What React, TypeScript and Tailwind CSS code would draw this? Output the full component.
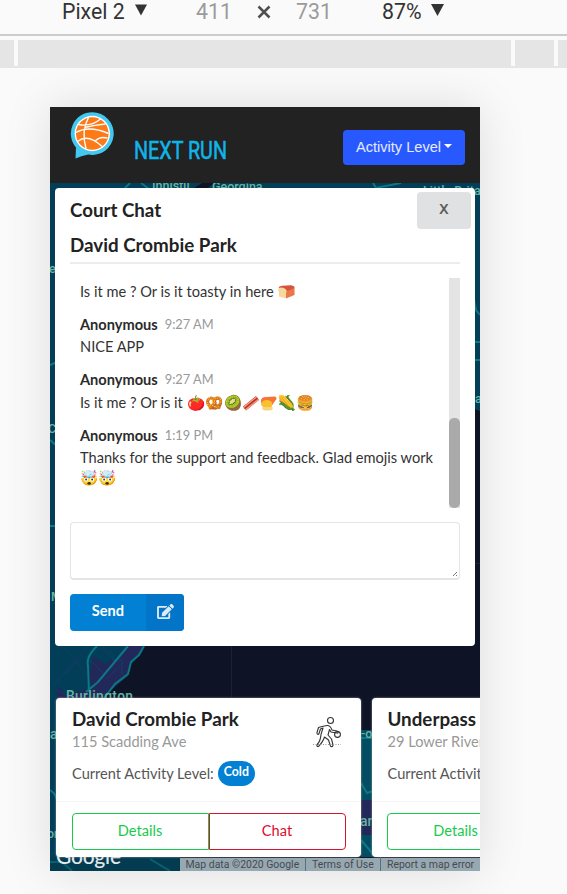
import React from "react";

const lato = "font-[Lato,'Noto_Color_Emoji',sans-serif]";

function Toolbar() {
  return (
    <div className="relative h-[36px] border-b-2 border-[#cccccc] font-[Roboto,sans-serif] text-[21.3px] leading-[24px] text-[#333]">
      <div className="flex h-[24px] whitespace-nowrap">
        <span className="ml-[62px] w-[73px]">Pixel 2</span>
        <svg className="mt-[4px] h-[12px] w-[12px]" viewBox="0 0 13 12"><path d="M0 0h13L6.500 12z" fill="#333" /></svg>
        <span className="ml-[49px] w-[61px] text-[#9b9b9b]">411</span>
        <svg className="mt-[5px] h-[14px] w-[14px]" viewBox="0 0 14 14"><path d="M1.500 1.500l11 11M12.500 1.500l-11 11" stroke="#505050" strokeWidth="2.500" /></svg>
        <span className="ml-[25px] w-[86px] text-[#9b9b9b]">731</span>
        <span className="w-[49px]">87%</span>
        <svg className="mt-[4px] h-[12px] w-[13px]" viewBox="0 0 13 12"><path d="M0 0h13L6.500 12z" fill="#333" /></svg>
      </div>
    </div>
  );
}

function Ruler() {
  return (
    <div className="relative mt-[4px] flex h-[28px] gap-[4px] border-b-2 border-[#e5e5e5]">
      <div className="w-[14px] bg-[#e5e5e5]" />
      <div className="w-[493px] bg-[#e5e5e5]" />
      <div className="w-[39px] bg-[#e5e5e5]" />
      <div className="flex-1 bg-[#e5e5e5]" />
    </div>
  );
}

function Logo() {
  return (
    <svg className="h-[50px] w-[46px]" viewBox="0 0 46 50">
      <path d="M23.300 1.300a21.300 21.300 0 1 1-4 42.200Q12 45 6.500 47.500L7 36.500A21.300 21.300 0 0 1 23.300 1.300z" fill="#43c8f0" />
      <circle cx="23.300" cy="22.500" r="17.700" fill="#fff" />
      <circle cx="23.300" cy="22.500" r="16.300" fill="#fc7a18" />
      <g fill="none" stroke="#fff" strokeWidth="1.400">
        <path d="M19.500 6.500Q12 20 17 37.500M7 21.500Q20 14 39.500 22.500M9.500 13.500Q22 16 31.500 8M8.500 30.500Q19 22 33 35.500M15.500 16.500Q26 14 36.500 13M26 30Q31 25 38.500 27" />
      </g>
    </svg>
  );
}

function MapArt() {
  return (
    <svg className="absolute inset-0 h-[688px] w-[430px]" viewBox="50 183 430 688" fontFamily="Roboto, sans-serif">
      <rect x="50" y="183" width="430" height="688" fill="#0e1326" />
      <path d="M50 183h430v228l-6-2V190H57v456h87l-4 8-9 10-3 12-30 25v170H50z" fill="#023e58" />
      <path d="M202 183h12l-6 5h-14z" fill="#0e1326" />
      <path d="M128 646h15l-4 9-8 7-3 12-25 24H57v-10l33-2z" fill="#23285a" />
      <path d="M57 646h69l-34 42-25 7-10-10z" fill="#023e58" />
      <path d="M93 656l12 8 6-4 4 2-22 26-4-10z" fill="#23285a" />
      <path d="M50 600l22 15 22 25 20 16M53 686l35-40M62 646l25 28M65 674l15-15M57 690l15 8M101 648l14 12M106 679l18-17M90 660l14 14M112 660h10v15" fill="none" stroke="#123c68" strokeWidth="1" />
      <g fill="none" stroke="#0c7884" strokeWidth="2">
        <path d="M97 646c-9 9-10 14-9 20l1 26M128 646l-30 36-12 10M144 646l-5 9-8 7-3 12-13 10-13 17M50 526h7M373 183l3 5 25-5M50 365l7-3M50 440l7 6M474 300l2 10 4 5M474 342h6M474 360h6" />
        <path d="M130 183l-5 5M141 183l8 6M50 790q9 5 7 20" />
      </g>
      <rect x="361" y="730" width="12" height="127" fill="#034d64" />
      <path d="M361 800h12v35h-12z" fill="#23285a" />
      <path d="M361 738h12M361 783l6 10 6-2M361 840l12 14" stroke="#0c7884" strokeWidth="2" fill="none" />
      <path d="M50 857h130v14H50z" fill="#033c50" />
      <path d="M50 862h12l10 9M150 859l20 12" stroke="#07626f" strokeWidth="2" fill="none" />
      <path d="M231.500 646v52M475 563.500h5" stroke="#1a2236" />
      <g fill="#64b5a4" fontSize="12.500" fontWeight="500">
        <text x="152" y="190">Innisfil</text>
        <text x="212" y="190.500">Georgina</text>
        <text x="423" y="195">Little Brita</text>
        <text x="49" y="273">e</text>
        <text x="48" y="433">C</text>
        <text x="475" y="403">a</text>
        <text x="51" y="601">M</text>
        <text x="66" y="701" fontSize="13.800" textLength="67">Burlington</text>
        <text x="50" y="739" fontSize="14">a</text>
        <text x="47" y="838">on</text>
        <text x="361" y="738">-on</text>
        <text x="360" y="826" fontSize="14">an</text>
      </g>
      <text x="56" y="863.500" fontSize="21" textLength="65" fontWeight="500" fontFamily="Lato, sans-serif" fill="#e4e9ec">Google</text>
    </svg>
  );
}

function Bread() {
  return (
    <svg className="ml-px inline-block h-[14px] w-[17px] align-[-2px]" viewBox="0 0 17 14">
      <path d="M7 6l9.500-3v7L8 13.500z" fill="#e8784a" />
      <path d="M1 3Q0 1.500 4 .7L13 .3q4 .5 3.500 3L8 6.500z" fill="#d4543c" />
      <path d="M1 3q4-1.500 7 1.500 1.500 2 0 3V13.500L1 11.500V7Q-.5 5 1 3z" fill="#f8d79c" />
    </svg>
  );
}

function Bacon() {
  return (
    <svg className="ml-px mr-px inline-block h-[16px] w-[16px] align-[-3px]" viewBox="0 0 16 16" fill="none">
      <path d="M1.500 13.500L14.500 3" stroke="#d84a38" strokeWidth="5" />
      <path d="M.8 12.200L13.500 2M2.500 14.800L15.500 4.400" stroke="#f5a58c" strokeWidth="1.100" />
      <path d="M1.500 13.500L14.500 3" stroke="#9f3028" strokeWidth="1" />
    </svg>
  );
}

function Roast() {
  return (
    <svg className="mr-px inline-block h-[15px] w-[17px] align-[-3px]" viewBox="0 0 17 15">
      <path d="M1 5Q1 1 6 1L15 .5Q18 2 15 5L11 11 1 7z" fill="#f4743b" />
      <path d="M1 8Q2 4 7 4 12 4.500 12.500 8 12 11.500 8 11.500 1 11.500 1 8z" fill="#fbc02f" />
      <path d="M2.500 11h10q1 3.500-3 3.500H5q-3.500-.5-2.500-3.500z" fill="#f7d580" />
    </svg>
  );
}

interface MessageProps { author?: string; time?: string; children: React.ReactNode; }

function Message({ author, time, children }: MessageProps) {
  return (
    <div className="mb-[10.5px]">
      {author && (
        <div className="flex h-[22px] items-center pt-[3px]">
          <span className="text-[14.600px] font-bold text-[#2b2b2b]">{author}</span>
          <span className="ml-[7px] text-[12.800px] text-[#999]">{time}</span>
        </div>
      )}
      <div className="h-[23px] w-[364px] pt-[3px] text-[14.620px] leading-[20px] text-[#333]">{children}</div>
    </div>
  );
}

function ChatPanel() {
  return (
    <section className={`relative ml-[5px] mt-[5px] h-[458px] w-[420px] rounded-[4px] bg-white px-[15px] ${lato}`}>
      <div className="flex h-[41px] justify-between">
        <h1 className="pt-[10px] text-[18.700px] leading-[24px] font-bold text-[#222]">Court Chat</h1>
        <button className="-mr-[11px] mt-[4px] flex h-[37px] w-[54px] items-center justify-center rounded-[4px] bg-[#e0e1e2] pb-[3px] font-['Noto_Sans',sans-serif] text-[14.600px] font-semibold text-[#5b5b5b]">X</button>
      </div>
      <h2 className="h-[35px] border-b-2 border-[#ececec] pt-[4px] text-[18.780px] leading-[23px] font-bold text-[#222]">David Crombie Park</h2>
      <div className="mt-[14px] flex h-[230px] justify-between pl-[10px]">
        <div className="mt-[.5px]">
          <Message>Is it me ? Or is it toasty in here <Bread /></Message>
          <Message author="Anonymous" time="9:27 AM">NICE APP</Message>
          <Message author="Anonymous" time="9:27 AM">Is it me ? Or is it <span className="ml-px">🍅🥨🥝</span><Bacon /><Roast /><span className="inline-block -scale-x-100">🌽</span>🍔</Message>
          <Message author="Anonymous" time="1:19 PM">Thanks for the support and feedback. Glad emojis work 🤯🤯</Message>
        </div>
        <div className="flex w-[11px] shrink-0 items-end bg-[#e4e4e4]">
          <div className="h-[90px] w-[11px] rounded-[5px] bg-[#aaa]" />
        </div>
      </div>
      <div className="mt-[14px] flex h-[58px] items-end justify-end rounded-[4px] border border-b-2 border-[#e3e4e5] p-[2px]">
        <svg className="h-[4px] w-[4px]" viewBox="0 0 4 4"><path d="M0 4l4-4M3 4l1-1" stroke="#777" /></svg>
      </div>
      <button className="mt-[14px] flex h-[37px] w-[114px] overflow-hidden rounded-[4px] bg-[#0280d4] text-white">
        <span className="w-[76px] pt-[7px] text-center text-[14.600px] leading-[20px] font-bold">Send</span>
        <span className="flex h-[37px] w-[38px] items-center justify-center bg-[#0275c8] pb-[2px]">
          <svg className="h-[15px] w-[17px]" viewBox="0 0 576 512" fill="#dceaf7"><path d="M402.600 83.200l90.200 90.200c3.800 3.800 3.800 10 0 13.800L274.400 405.600l-92.800 10.300c-12.400 1.400-22.900-9.100-21.500-21.500l10.300-92.800L388.800 83.200c3.800-3.800 10-3.800 13.800 0zm162-22.900l-48.800-48.800c-15.200-15.200-39.900-15.200-55.200 0l-35.400 35.400c-3.800 3.800-3.800 10 0 13.800l90.200 90.200c3.800 3.800 10 3.800 13.800 0l35.400-35.400c15.200-15.300 15.200-40 0-55.200zM384 346.200V448H64V128h229.800c3.200 0 6.200-1.300 8.500-3.500l40-40c7.600-7.600 2.200-20.500-8.500-20.500H48C21.500 64 0 85.500 0 112v352c0 26.500 21.500 48 48 48h352c26.500 0 48-21.500 48-48V306.200c0-10.700-12.900-16-20.500-8.500l-40 40c-2.200 2.300-3.500 5.300-3.500 8.500z" /></svg>
        </span>
      </button>
    </section>
  );
}

function Dribbler() {
  return (
    <svg className="h-[32px] w-[29px] shrink-0" viewBox="0 0 29 32" fill="none" stroke="#333" strokeWidth="1.100" strokeLinejoin="round">
      <circle cx="17.500" cy="4.500" r="3" />
      <circle cx="24.500" cy="18.500" r="2.900" />
      <path d="M9 10.500l5-1c3-.5 4 2 5 4.500l5 1c2 1 1 2.500 0 2l-6-1-1.500-2.500-1.500 5.500 3.500 4 1.500 6c0 2-2 2-2.500 1l-2-6-4-3c-1 3.500-2.500 5.500-5.500 9-1.500 1.500-3-.5-1.500-2 3-3 3-6 3.500-9.500l2-6.500-2.500 1-1.500 4.500c-.5 1.500-2.500 1-2-1l1.500-5z" />
      <path d="M0 28.500h28" stroke="#999" strokeDasharray="1 1.500" />
    </svg>
  );
}

function CourtCard({ name, address, level, icon }: { name: string; address: string; level: string; icon?: boolean }) {
  return (
    <article className={`h-[159px] w-[305px] shrink-0 rounded-[4px] bg-white shadow-[0_0_2px_#aaa] ${lato}`}>
      <div className="h-[104px] border-b border-[#f5f5f5] px-[16px] pt-[9px]">
        <div className="flex justify-between">
          <div className="whitespace-nowrap">
            <h3 className="text-[18.780px] leading-[24px] font-bold text-[#222]">{name}</h3>
            <p className="pt-px text-[14.600px] leading-[20px] text-[#999]">{address}</p>
          </div>
          {icon && <div className="mr-[3px] mt-[9px]"><Dribbler /></div>}
        </div>
        <div className="mt-[8px] flex h-[27px] items-center whitespace-nowrap text-[14.600px] text-[#555]">
          <span>Current Activity Level:</span>
          <span className="ml-[4px] h-[25px] rounded-full bg-[#0280d4] px-[6px] pt-[1px] text-[12.300px] leading-[20px] font-bold text-white">{level}</span>
        </div>
      </div>
      <div className="mx-[15.500px] mt-[11px] flex h-[37px] text-[14.600px]">
        <button className="w-[137px] rounded-l-[4px] border border-[#16cb4c] pb-[2px] text-[#16cb4c]">Details</button>
        <button className="w-[137px] rounded-r-[4px] border border-[#d5152d] pb-[2px] text-[#e00a2c]">Chat</button>
      </div>
    </article>
  );
}

export default function App() {
  return (
    <main className="h-[894px] w-[567px] overflow-hidden bg-[#fafafa]">
      <Toolbar />
      <Ruler />
      <div className="ml-[50px] mt-[39px] h-[764px] w-[430px] shadow-[0_0_45px_rgba(0,0,0,0.12)]">
        <header className="flex h-[76px] bg-[#222]">
          <div className="ml-[19px] mt-[4px]"><Logo /></div>
          <svg className="ml-[18px] mt-[25px] h-[36px] w-[96px] overflow-visible" viewBox="0 0 96 36">
            <text x="1" y="27.300" fontSize="26.500" textLength="93" lengthAdjust="spacingAndGlyphs" fontFamily="Roboto, sans-serif" fill="#10b5e8" stroke="#10b5e8" strokeWidth=".6" strokeLinejoin="round">NEXT RUN</text>
          </svg>
          <button className="ml-auto mr-[15px] mt-[23px] flex h-[35px] w-[122px] items-center justify-center gap-[3px] rounded-[4px] bg-[#2859ff] font-['Liberation_Sans',Arial,sans-serif] text-[14.600px] text-[#e5ebff]">
            <span className="whitespace-nowrap">Activity Level</span>
            <svg className="mb-[3px] h-[4px] w-[8px]" viewBox="0 0 8 4"><path d="M0 0h8L4 4z" fill="#fff" /></svg>
          </button>
        </header>
        <div className="relative h-[688px] overflow-hidden">
          <MapArt />
          <div className="relative flex h-full flex-col overflow-hidden">
            <ChatPanel />
            <div className="ml-[6px] mt-[52px] flex gap-[10.500px]">
              <CourtCard name="David Crombie Park" address="115 Scadding Ave" level="Cold" icon />
              <CourtCard name="Underpass Park" address="29 Lower River St" level="Cold" />
            </div>
            <div className="ml-[130px] mt-px flex h-[13px] items-center whitespace-nowrap bg-[#98a8b1] font-[Roboto,sans-serif] text-[10.450px] text-[#434b51]">
              <span className="w-[125px] pl-[5.500px]">Map data ©2020 Google</span>
              <span className="w-[75px] border-l border-[#53727e] pl-[6px]">Terms of Use</span>
              <span className="border-l border-[#53727e] pl-[6px]">Report a map error</span>
            </div>
          </div>
        </div>
      </div>
    </main>
  );
}
